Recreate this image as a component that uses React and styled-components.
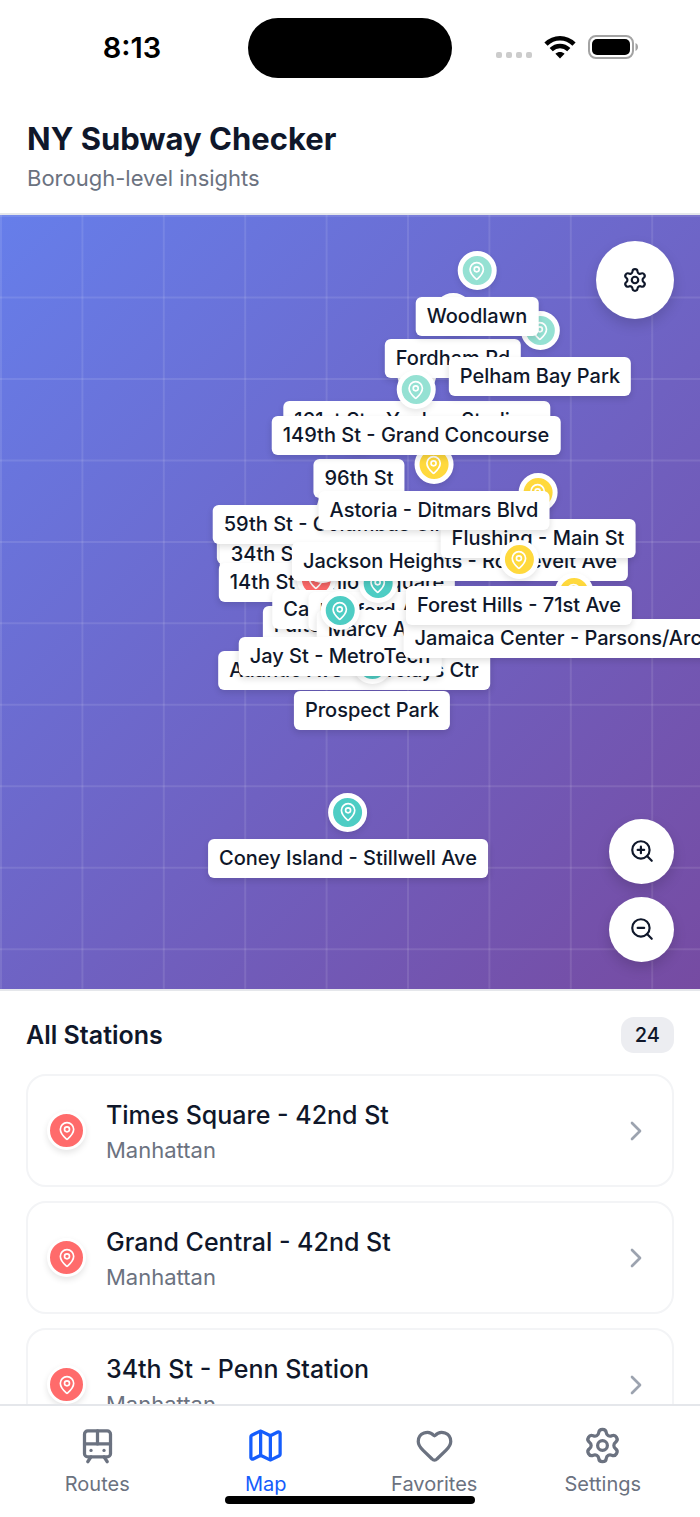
import React from "react";
import styled, { createGlobalStyle } from "styled-components";
import {
  ChevronRight,
  Heart,
  Map as MapIcon,
  MapPin,
  Settings,
  TramFront,
  ZoomIn,
  ZoomOut,
} from "lucide-react";

const GlobalStyle = createGlobalStyle`
  * {
    box-sizing: border-box;
  }

  body {
    margin: 0;
    background-color: #ffffff;
    color: #0f172a;
    font-family: Inter, "Liberation Sans", sans-serif;
  }
`;

const Screen = styled.div`
  display: flex;
  flex-direction: column;
  height: 100vh;
  overflow: hidden;
`;

const StatusBar = styled.div`
  display: grid;
  grid-template-columns: 1fr auto 1fr;
  align-items: center;
  flex-shrink: 0;
  height: 96px;
  color: #000000;
`;

const Clock = styled.span`
  padding-left: 16px;
  text-align: center;
  font-size: 29px;
  line-height: 36px;
  font-weight: 600;
`;

const Island = styled.div`
  width: 204px;
  height: 60px;
  border-radius: 30px;
  background-color: #000000;
`;

const StatusIcons = styled.div`
  display: flex;
  align-items: center;
  justify-content: center;
  gap: 12px;
  padding: 0 18px 2px 0;
`;

const Header = styled.header`
  flex-shrink: 0;
  padding: 23px 27px 20px;
  border-bottom: 2px solid #e5e7eb;
`;

const Title = styled.h1`
  margin: 0;
  font-size: 31px;
  line-height: 40px;
  font-weight: 700;
`;

const Subtitle = styled.p`
  margin: 4px 0 0;
  color: #6b7280;
  font-size: 22px;
  line-height: 30px;
`;

const MapArea = styled.section`
  position: relative;
  flex-shrink: 0;
  height: 51vh;
  overflow: hidden;
  background: linear-gradient(135deg, #667eea 0%, #764ba2 100%);
`;

const GridLines = styled.svg`
  display: block;
  width: 100%;
  height: 100%;
  stroke: rgba(255, 255, 255, 0.1);
  stroke-width: 2px;
`;

const Marker = styled.div`
  position: absolute;
  display: flex;
  flex-direction: column;
  align-items: center;
  gap: 7px;
  width: max-content;
  transform: translate(-50%, -20px);
`;

const Pin = styled.span`
  display: flex;
  align-items: center;
  justify-content: center;
  flex-shrink: 0;
  width: 39px;
  height: 39px;
  border: ${({ $thin }) => ($thin ? 3 : 5)}px solid #ffffff;
  border-radius: 50%;
  background-color: ${({ $color }) => $color};
  color: #ffffff;
  box-shadow: 0 3px 6px rgba(0, 0, 0, 0.1);
`;

const MarkerLabel = styled.span`
  padding: 0 11px;
  border-radius: 6px;
  background-color: #ffffff;
  font-size: 20px;
  line-height: 39px;
  font-weight: 500;
  white-space: nowrap;
  box-shadow: 0 3px 6px rgba(0, 0, 0, 0.12);
`;

const RoundButton = styled.button`
  display: flex;
  align-items: center;
  justify-content: center;
  width: ${({ $size }) => $size}px;
  height: ${({ $size }) => $size}px;
  padding: 0;
  border: none;
  border-radius: 50%;
  background-color: #ffffff;
  color: #0f172a;
  box-shadow: 0 6px 13px rgba(0, 0, 0, 0.15);
`;

const MapOptions = styled.div`
  position: absolute;
  top: 26px;
  right: 26px;
`;

const ZoomControls = styled.div`
  position: absolute;
  right: 26px;
  bottom: 27px;
  display: flex;
  flex-direction: column;
  gap: 13px;
`;

const Stations = styled.section`
  flex: 1;
  min-height: 0;
  overflow: hidden;
  padding: 26px 26px 0;
  border-top: 2px solid #e5e7eb;
`;

const StationsHeader = styled.div`
  display: flex;
  align-items: center;
  justify-content: space-between;
  margin-bottom: 21px;
`;

const StationsTitle = styled.h2`
  margin: 0;
  font-size: 25px;
  line-height: 36px;
  font-weight: 600;
`;

const Count = styled.span`
  padding: 0 14px;
  border-radius: 13px;
  background-color: #ecedf1;
  font-size: 20px;
  line-height: 36px;
  font-weight: 500;
`;

const StationList = styled.ul`
  display: flex;
  flex-direction: column;
  gap: 14px;
  margin: 0;
  padding: 0;
  list-style: none;
`;

const StationCard = styled.button`
  display: flex;
  align-items: center;
  gap: 20px;
  width: 100%;
  padding: 21px 20px 20px 19px;
  border: 2px solid #f3f4f6;
  border-radius: 20px;
  background-color: #ffffff;
  color: #0f172a;
  font-family: inherit;
  text-align: left;
`;

const StationText = styled.span`
  display: flex;
  flex: 1;
  flex-direction: column;
  gap: 2px;
`;

const StationName = styled.span`
  font-size: 25px;
  line-height: 36px;
  font-weight: 500;
`;

const StationBorough = styled.span`
  color: #6b7280;
  font-size: 22px;
  line-height: 30px;
`;

const TabBar = styled.nav`
  position: relative;
  display: flex;
  flex-shrink: 0;
  height: 113px;
  padding: 20px 13px 0;
  border-top: 2px solid #e5e7eb;
  background-color: #ffffff;
`;

const Tab = styled.a`
  display: flex;
  flex: 1;
  flex-direction: column;
  align-items: center;
  gap: 6px;
  color: ${({ $active }) => ($active ? "#155dfc" : "#6b7280")};
  font-size: 20px;
  line-height: 26px;
  text-decoration: none;
`;

const HomeIndicator = styled.div`
  position: absolute;
  bottom: 13px;
  left: 50%;
  width: 250px;
  height: 8px;
  border-radius: 4px;
  background-color: #000000;
  transform: translateX(-50%);
`;

const COLORS = {
  Manhattan: "#ff6b6b",
  Brooklyn: "#4ecdc4",
  Queens: "#ffd93d",
  Bronx: "#95e1d3",
};

const MAP_WIDTH = 700;
const MAP_HEIGHT = 773;
const GRID_STEP = 81.4;

// later markers are drawn over earlier ones
const markers = [
  { name: "Times Square - 42nd St", borough: "Manhattan", x: 341, y: 284 },
  { name: "Grand Central - 42nd St", borough: "Manhattan", x: 353, y: 290 },
  { name: "34th St - Penn Station", borough: "Manhattan", x: 336, y: 294 },
  { name: "14th St - Union Square", borough: "Manhattan", x: 337, y: 322 },
  { name: "59th St - Columbus Circle", borough: "Manhattan", x: 347, y: 264 },
  { name: "96th St", borough: "Manhattan", x: 359, y: 218 },
  { name: "Fulton St", borough: "Manhattan", x: 316, y: 365 },
  { name: "Canal St", borough: "Manhattan", x: 323, y: 349 },
  { name: "Atlantic Ave - Barclays Ctr", borough: "Brooklyn", x: 354, y: 410 },
  { name: "Bedford Ave", borough: "Brooklyn", x: 378, y: 351 },
  { name: "Marcy Ave", borough: "Brooklyn", x: 378, y: 369 },
  { name: "Prospect Park", borough: "Brooklyn", x: 372, y: 450 },
  { name: "Jay St - MetroTech", borough: "Brooklyn", x: 340, y: 396 },
  { name: "Coney Island - Stillwell Ave", borough: "Brooklyn", x: 348, y: 597 },
  { name: "Jackson Heights - Roosevelt Ave", borough: "Queens", x: 460, y: 301 },
  { name: "Flushing - Main St", borough: "Queens", x: 538, y: 278 },
  { name: "Jamaica Center - Parsons/Archer", borough: "Queens", x: 574, y: 378 },
  { name: "Forest Hills - 71st Ave", borough: "Queens", x: 519, y: 345 },
  { name: "Astoria - Ditmars Blvd", borough: "Queens", x: 434, y: 250 },
  { name: "161st St - Yankee Stadium", borough: "Bronx", x: 417, y: 160 },
  { name: "Fordham Rd", borough: "Bronx", x: 453, y: 98 },
  { name: "149th St - Grand Concourse", borough: "Bronx", x: 416, y: 175 },
  { name: "Pelham Bay Park", borough: "Bronx", x: 540, y: 116 },
  { name: "Woodlawn", borough: "Bronx", x: 477, y: 56 },
];

const stations = markers.slice(0, 3);

const tabs = [
  { label: "Routes", icon: TramFront },
  { label: "Map", icon: MapIcon, active: true },
  { label: "Favorites", icon: Heart },
  { label: "Settings", icon: Settings },
];

const percent = (value, total) => `${(value / total) * 100}%`;

function SignalIcon() {
  return (
    <svg width="36" height="24" viewBox="0 0 36 24" fill="#cccccc">
      <rect x="0" y="17" width="6" height="6" rx="2" />
      <rect x="10" y="17" width="6" height="6" rx="2" />
      <rect x="20" y="17" width="6" height="6" rx="2" />
      <rect x="30" y="17" width="6" height="6" rx="2" />
    </svg>
  );
}

function WifiIcon() {
  return (
    <svg width="32" height="24" viewBox="0 0 32 24" fill="none" stroke="#000000" strokeWidth="4.6">
      <path d="M2 9.2C10 1.3 22 1.3 30 9.2" />
      <path d="M7.2 14.6C12.3 9.8 19.7 9.8 24.8 14.6" />
      <path d="M11.4 18.8C14 16.3 18 16.3 20.6 18.8L16 23.4Z" fill="#000000" stroke="none" />
    </svg>
  );
}

function BatteryIcon() {
  return (
    <svg width="50" height="24" viewBox="0 0 50 24">
      <rect x="1" y="1" width="44" height="22" rx="7" fill="none" stroke="#a3a3a3" strokeWidth="2" />
      <rect x="4" y="4" width="38" height="16" rx="5" fill="#000000" />
      <path d="M47.5 8C49.2 8.8 50 10.2 50 12C50 13.8 49.2 15.2 47.5 16Z" fill="#a3a3a3" />
    </svg>
  );
}

function Grid() {
  return (
    <GridLines aria-hidden="true">
      {Array.from({ length: 9 }, (_, i) => {
        const x = percent(i * GRID_STEP + 1, MAP_WIDTH);
        return <line key={i} x1={x} x2={x} y1="0" y2="100%" />;
      })}
      {Array.from({ length: 10 }, (_, i) => {
        const y = percent(i * GRID_STEP + 1, MAP_HEIGHT);
        return <line key={i} x1="0" x2="100%" y1={y} y2={y} />;
      })}
    </GridLines>
  );
}

function App() {
  return (
    <Screen>
      <GlobalStyle />
      <StatusBar>
        <Clock>8:13</Clock>
        <Island />
        <StatusIcons>
          <SignalIcon />
          <WifiIcon />
          <BatteryIcon />
        </StatusIcons>
      </StatusBar>
      <Header>
        <Title>NY Subway Checker</Title>
        <Subtitle>Borough-level insights</Subtitle>
      </Header>
      <MapArea>
        <Grid />
        {markers.map(({ name, borough, x, y }) => (
          <Marker
            key={name}
            style={{ left: percent(x, MAP_WIDTH), top: percent(y, MAP_HEIGHT) }}
          >
            <Pin $color={COLORS[borough]}>
              <MapPin size={20} />
            </Pin>
            <MarkerLabel>{name}</MarkerLabel>
          </Marker>
        ))}
        <MapOptions>
          <RoundButton $size={78} aria-label="Map settings">
            <Settings size={26} />
          </RoundButton>
        </MapOptions>
        <ZoomControls>
          <RoundButton $size={65} aria-label="Zoom in">
            <ZoomIn size={26} />
          </RoundButton>
          <RoundButton $size={65} aria-label="Zoom out">
            <ZoomOut size={26} />
          </RoundButton>
        </ZoomControls>
      </MapArea>
      <Stations>
        <StationsHeader>
          <StationsTitle>All Stations</StationsTitle>
          <Count>{markers.length}</Count>
        </StationsHeader>
        <StationList>
          {stations.map(({ name, borough }) => (
            <li key={name}>
              <StationCard>
                <Pin $color={COLORS[borough]} $thin>
                  <MapPin size={20} />
                </Pin>
                <StationText>
                  <StationName>{name}</StationName>
                  <StationBorough>{borough}</StationBorough>
                </StationText>
                <ChevronRight size={32} color="#9ca3af" />
              </StationCard>
            </li>
          ))}
        </StationList>
      </Stations>
      <TabBar>
        {tabs.map(({ label, icon: Icon, active }) => (
          <Tab key={label} href="#" $active={active}>
            <Icon size={39} />
            {label}
          </Tab>
        ))}
        <HomeIndicator />
      </TabBar>
    </Screen>
  );
}

export default App;
